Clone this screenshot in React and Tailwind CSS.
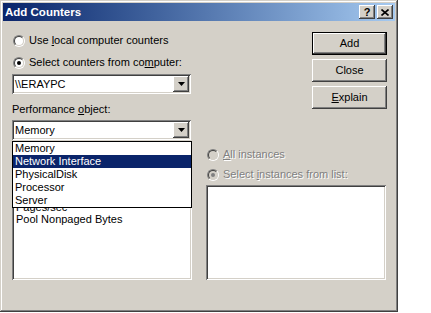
import React from "react";

const raised =
  "shadow-[inset_-1px_-1px_#404040,inset_1px_1px_#ffffff,inset_-2px_-2px_#808080,inset_2px_2px_#d4d0c8]";
const sunken =
  "shadow-[inset_1px_1px_#808080,inset_-1px_-1px_#ffffff,inset_2px_2px_#404040,inset_-2px_-2px_#d4d0c8]";

function Radio({ checked, disabled }) {
  return (
    <span className="relative block w-[12px] h-[12px] shrink-0 rounded-full border border-t-[#808080] border-l-[#808080] border-b-white border-r-white">
      <span
        className={`absolute inset-0 flex items-center justify-center rounded-full border border-t-[#404040] border-l-[#404040] border-b-[#d4d0c8] border-r-[#d4d0c8] ${
          disabled ? "bg-[#d4d0c8]" : "bg-white"
        }`}
      >
        {checked && (
          <span
            className={`block w-[4px] h-[4px] rounded-full ${
              disabled ? "bg-[#808080]" : "bg-black"
            }`}
          />
        )}
      </span>
    </span>
  );
}

function RadioRow({ checked, disabled, children, className = "" }) {
  return (
    <div className={`flex items-center gap-[4px] h-[13px] ml-[1px] ${className}`}>
      <Radio checked={checked} disabled={disabled} />
      <span
        className={
          disabled
            ? "text-[#808080] [text-shadow:1px_1px_0_#ffffff] whitespace-nowrap"
            : "whitespace-nowrap"
        }
      >
        {children}
      </span>
    </div>
  );
}

function Arrow() {
  return (
    <svg width="7" height="4" viewBox="0 0 7 4">
      <path d="M0 0h7L3.5 4z" fill="#000" />
    </svg>
  );
}

function Combo({ value, children, className = "" }) {
  return (
    <div className={`relative w-[179px] h-[20px] bg-white p-[2px] flex items-center ${sunken} ${className}`}>
      <span className="flex-1 pl-[1px] whitespace-nowrap">{value}</span>
      <div className={`w-[16px] h-[16px] bg-[#d4d0c8] flex items-center justify-center ${raised}`}>
        <Arrow />
      </div>
      {children}
    </div>
  );
}

function Button({ children, isDefault }) {
  if (isDefault) {
    return (
      <div className="w-[75px] h-[23px] border border-black">
        <div className={`w-full h-full flex items-center justify-center bg-[#d4d0c8] ${raised}`}>
          {children}
        </div>
      </div>
    );
  }
  return (
    <div className={`w-[75px] h-[23px] flex items-center justify-center bg-[#d4d0c8] ${raised}`}>
      {children}
    </div>
  );
}

function TitleButton({ children }) {
  return (
    <div className={`w-[16px] h-[14px] bg-[#d4d0c8] flex items-center justify-center ${raised}`}>
      {children}
    </div>
  );
}

export default function App() {
  return (
    <div className="min-h-[313px] bg-white font-['Liberation_Sans',Arial,sans-serif] text-[11px] leading-[13px] text-black">
      <div
        className={`w-[398px] h-[312px] bg-[#d4d0c8] flex flex-col shadow-[inset_-1px_-1px_#404040,inset_1px_1px_#d4d0c8,inset_-2px_-2px_#808080,inset_2px_2px_#ffffff]`}
      >
        {/* Title bar */}
        <div className="mx-[3px] mt-[3px] h-[18px] bg-linear-to-r from-[#0a246a] to-[#a6caf0] flex items-center pl-[2px] pr-[2px]">
          <span className="text-white font-bold text-[11.5px] flex-1">Add Counters</span>
          <div className="flex gap-[2px]">
            <TitleButton>
              <span className="font-bold text-[11px] leading-none">?</span>
            </TitleButton>
            <TitleButton>
              <svg width="8" height="7" viewBox="0 0 8 7">
                <path d="M0.5 0.5L7.5 6.5M7.5 0.5L0.5 6.5" stroke="#000" strokeWidth="1.6" />
              </svg>
            </TitleButton>
          </div>
        </div>

        {/* Body */}
        <div className="pl-[12px] pr-[11px] flex flex-col">
          {/* Top row */}
          <div className="flex justify-between items-start">
            <div className="flex flex-col w-[180px] pt-[13px]">
              <RadioRow>
                Use <span className="underline">l</span>ocal computer counters
              </RadioRow>
              <RadioRow checked className="mt-[9px]">
                Select counters from co<span className="underline">m</span>puter:
              </RadioRow>
              <Combo value={"\\\\ERAYPC"} className="mt-[5px]" />
              <div className="mt-[9px] h-[13px]">
                Performance <span className="underline">o</span>bject:
              </div>
              <Combo value="Memory" className="mt-[4px] z-10">
                <div className="absolute left-0 top-[21px] w-[180px] bg-white border border-black">
                  {["Memory", "Network Interface", "PhysicalDisk", "Processor", "Server"].map(
                    (item) => (
                      <div
                        key={item}
                        className={
                          item === "Network Interface"
                            ? "h-[13px] pl-[2px] bg-[#0a246a] text-white"
                            : "h-[13px] pl-[2px]"
                        }
                      >
                        {item}
                      </div>
                    )
                  )}
                </div>
              </Combo>
            </div>
            <div className="flex flex-col gap-[4px] pt-[11px]">
              <Button isDefault>Add</Button>
              <Button>Close</Button>
              <Button>
                <span>
                  <span className="underline">E</span>xplain
                </span>
              </Button>
            </div>
          </div>

          {/* Bottom row */}
          <div className="flex gap-[14px]">
            <div className="w-[180px] flex flex-col">
              {/* radios hidden behind the open drop-down list */}
              <div className="mt-[8px] h-[13px]" />
              <div className="mt-[7px] h-[13px]" />
              <div className={`mt-[4px] h-[95px] bg-white p-[2px] ${sunken}`}>
                <div className="h-[13px]" />
                <div className="h-[13px] pl-[2px] pt-[2px] leading-[11px] overflow-hidden">Pages/sec</div>
                <div className="h-[13px] pl-[2px]">Pool Nonpaged Bytes</div>
              </div>
            </div>
            <div className="w-[180px] flex flex-col">
              <RadioRow disabled className="mt-[8px]">
                <span className="underline">A</span>ll instances
              </RadioRow>
              <RadioRow disabled checked className="mt-[7px]">
                Select <span className="underline">i</span>nstances from list:
              </RadioRow>
              <div className={`mt-[4px] h-[95px] bg-white ${sunken}`} />
            </div>
          </div>
        </div>
      </div>
    </div>
  );
}
